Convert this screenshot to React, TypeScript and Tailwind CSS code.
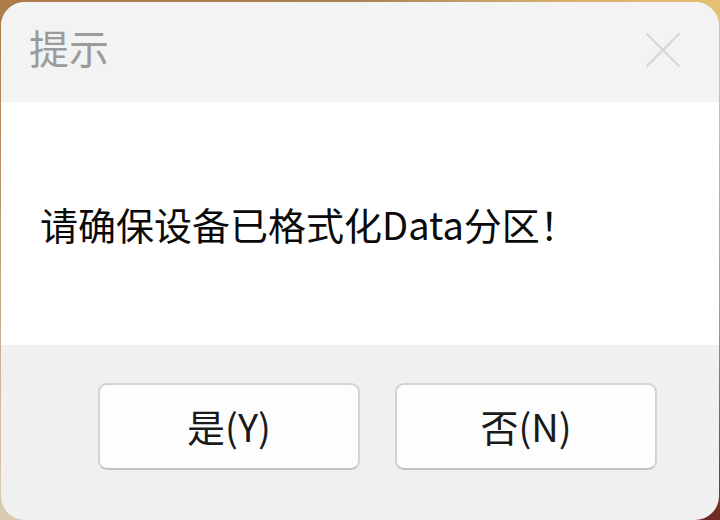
// 系统提示对话框 — "是 / 否" 确认
const font = { fontFamily: '"Noto Sans CJK SC", "Noto Sans", sans-serif' };

function CloseIcon() {
  return (
    <svg width="34" height="34" viewBox="0 0 34 34" fill="none" className="text-[#d4d4d4]">
      <path d="M1 1L33 33M33 1L1 33" stroke="currentColor" strokeWidth="2" strokeLinecap="round" />
    </svg>
  );
}

function DialogButton({ label }: { label: string }) {
  return (
    <button
      className="w-[262px] h-[87px] rounded-[9px] border-2 border-[#d3d3d3] border-b-[#c2c2c2] bg-[#fdfdfd] text-[38px] text-[#1a1a1a] flex items-center justify-center pb-[2px]"
      style={font}
    >
      {label}
    </button>
  );
}

export default function App() {
  return (
    <div className="w-[720px] h-[520px] pt-[2px] px-[1px] bg-[conic-gradient(from_0deg,#a88256_0deg,#d8b070_40deg,#e9c476_60deg,#c89060_100deg,#6e2a22_126deg,#8a5040_160deg,#b8a890_200deg,#d9ccb2_234deg,#c0a078_270deg,#ad7a48_306deg,#a88256_360deg)]">
      <div className="h-full rounded-[24px] overflow-hidden flex flex-col bg-[#f0f0f0]" style={font}>
        {/* title bar */}
        <div className="h-[100px] shrink-0 bg-[#f3f3f3] flex items-center justify-between pl-[28px] pr-[39px] pb-[4px]">
          <span className="text-[40px] text-[#9b9b9b] leading-none pb-[6px]">提示</span>
          <CloseIcon />
        </div>

        {/* message */}
        <div className="h-[243px] shrink-0 bg-white flex items-center pl-[39px]">
          <p className="text-[38px] text-[#0a0a0a] leading-none">请确保设备已格式化Data分区！</p>
        </div>

        {/* buttons */}
        <div className="flex-1 flex items-start pt-[38px] pl-[97px] gap-[35px]">
          <DialogButton label="是(Y)" />
          <DialogButton label="否(N)" />
        </div>
      </div>
    </div>
  );
}
